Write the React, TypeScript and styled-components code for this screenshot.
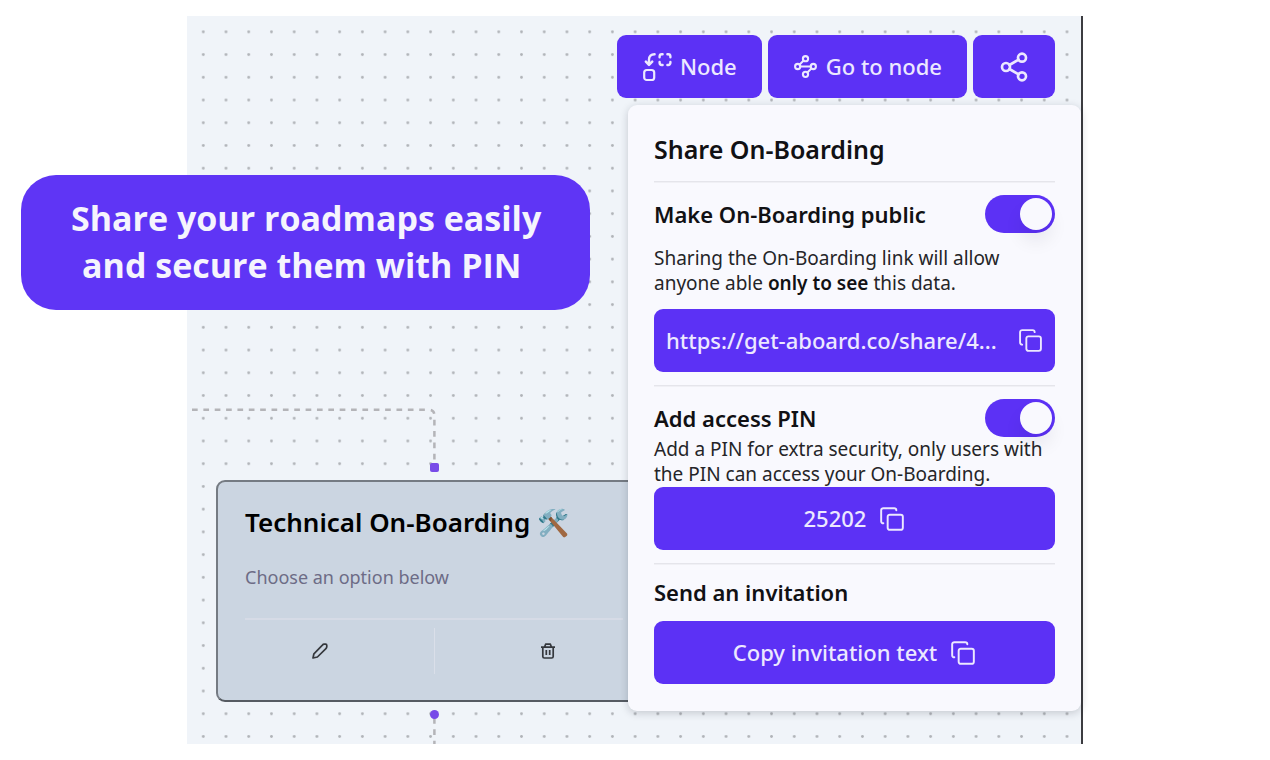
import React from "react";
import styled, { createGlobalStyle, css } from "styled-components";
import { Copy, Share2, Waypoints } from "lucide-react";

const color = {
  primary: "#5c31f5",
  callout: "#5f35f5",
  onPrimary: "#ece8ff",
  canvas: "#f0f4f9",
  panel: "#f9f9fe",
  card: "#cbd5e1",
  ink: "#111114",
  line: "#e5e5eb",
  edge: "#b4b4b8",
  handle: "#784be8",
};

const GlobalStyle = createGlobalStyle`
  * { box-sizing: border-box; }
  body {
    margin: 0;
    background: #ffffff;
    color: ${color.ink};
    font-family: "Noto Sans", "Open Sans", sans-serif;
  }
  h1, h2, h3, p { margin: 0; }
  button { font-family: inherit; cursor: pointer; }
`;

const Page = styled.main`
  padding: 16px 187px;
`;

const Stage = styled.section`
  position: relative;
  display: flex;
  flex-direction: column;
  align-items: flex-end;
  gap: 7px;
  padding: 19px 0 33px;
  background: ${color.canvas};
  border-right: 2px solid #3c3c40;
`;

const Backdrop = styled.svg`
  position: absolute;
  inset: 0;
  width: 100%;
  height: 100%;
`;

const Toolbar = styled.nav`
  position: relative;
  display: flex;
  gap: 6px;
  padding-right: 26px;
`;

const Button = styled.button<{ $block?: boolean; $spread?: boolean; $gap?: number }>`
  display: flex;
  align-items: center;
  justify-content: ${(p) => (p.$spread ? "space-between" : "center")};
  gap: ${(p) => p.$gap ?? 8}px;
  height: 63px;
  padding: 0 ${(p) => (p.$spread ? 12 : 25)}px;
  border: 0;
  border-radius: 9px;
  background: ${color.primary};
  color: ${color.onPrimary};
  font-size: 22px;
  font-weight: 500;
  line-height: 31px;
  white-space: nowrap;
  ${(p) =>
    p.$block &&
    css`
      width: 100%;
    `}
`;

const Panel = styled.aside`
  position: relative;
  display: flex;
  flex-direction: column;
  gap: 13px;
  width: 453px;
  padding: 26px 26px 27px;
  border-radius: 9px;
  background: ${color.panel};
  box-shadow: 0 2px 8px rgba(20, 24, 40, 0.2);
`;

const PanelTitle = styled.h1`
  font-size: 25px;
  font-weight: 600;
  line-height: 37px;
`;

const Divider = styled.hr`
  width: 100%;
  height: 1px;
  margin: 0;
  border: 0;
  background: ${color.line};
  box-shadow: 0 1px 0 #f0f0f5;
`;

const SettingRow = styled.label`
  display: flex;
  align-items: center;
  justify-content: space-between;
  height: 38px;
  font-size: 22px;
  font-weight: 600;
  line-height: 28px;
  cursor: pointer;
`;

const SectionTitle = styled.h2`
  font-size: 22px;
  font-weight: 600;
  line-height: 31px;
`;

const Switch = styled.input`
  appearance: none;
  display: flex;
  width: 70px;
  height: 38px;
  margin: 0;
  padding: 3px;
  border-radius: 19px;
  background: #c9c9d6;
  cursor: pointer;

  &::before {
    content: "";
    width: 32px;
    height: 32px;
    border-radius: 50%;
    background: ${color.panel};
    box-shadow: 0 12px 18px rgba(20, 20, 40, 0.07);
  }

  &:checked {
    justify-content: flex-end;
    background: ${color.primary};
  }
`;

const Note = styled.p`
  font-size: 19px;
  line-height: 25px;
  color: #252528;

  strong { font-weight: 600; color: ${color.ink}; }
`;

const Group = styled.div`
  display: flex;
  flex-direction: column;
`;

const NodeCard = styled.article`
  position: absolute;
  left: 29px;
  top: 464px;
  width: 436px;
  padding: 22px 27px 26px;
  border: 2px solid #757b83;
  border-bottom-color: #565b62;
  border-radius: 9px;
  background: ${color.card};
`;

const NodeTitle = styled.h3`
  margin-bottom: 24px;
  font-size: 26px;
  font-weight: 600;
  line-height: 36px;
  color: #000000;
  white-space: nowrap;
`;

const NodeText = styled.p`
  margin-bottom: 28px;
  font-size: 18px;
  line-height: 26px;
  color: #6d6c86;
`;

const NodeActions = styled.div`
  display: flex;
  padding-top: 8px;
  border-top: 2px solid #d6dbe6;
`;

const NodeAction = styled.button`
  display: flex;
  flex: 1;
  align-items: center;
  justify-content: center;
  height: 46px;
  padding: 0 38px 0 0;
  border: 0;
  background: none;
  color: #35383d;

  & + & {
    padding: 0 0 0 38px;
    border-left: 1px solid #dadfe9;
  }
`;

const Handle = styled.span<{ $side: "top" | "bottom" }>`
  position: absolute;
  left: 212px;
  ${(p) => (p.$side === "top" ? "top: -19px" : "bottom: -19px")};
  width: 9px;
  height: 9px;
  border-radius: ${(p) => (p.$side === "top" ? "2px" : "50%")};
  background: ${color.handle};
`;

const Callout = styled.p`
  position: absolute;
  left: -166px;
  top: 159px;
  padding: 20px 49px 21px 50px;
  border-radius: 35px;
  background: ${color.callout};
  color: #f5f4fd;
  font-family: "Open Sans", "Noto Sans", sans-serif;
  font-size: 34px;
  font-weight: 700;
  line-height: 47px;
  text-align: center;
  white-space: pre;
`;

const AddNodeIcon = () => (
  <svg width="30" height="30" viewBox="0 0 30 30" fill="none" stroke="currentColor" strokeWidth="2.2" strokeLinecap="round" aria-hidden="true">
    <rect x="2.2" y="18" width="10" height="10" rx="2.6" />
    <path d="M12.6 2.2C9 2.2 7 4.2 7 7.6V12" strokeWidth="2.4" />
    <path d="M3.9 9.6L7 12.8l3.2-3.2" strokeWidth="2.6" strokeLinejoin="round" />
    <path
      d="M17.6 5.2V4.4A2.2 2.2 0 0 1 19.8 2.2h.8M25.4 2.2h.8a2.2 2.2 0 0 1 2.2 2.2v.8M28.4 10v.8a2.2 2.2 0 0 1-2.2 2.2h-.8M20.6 13h-.8a2.2 2.2 0 0 1-2.2-2.2V10"
      strokeWidth="2.4"
    />
  </svg>
);

const PencilIcon = () => (
  <svg width="16" height="16" viewBox="0 0 16 16" fill="none" stroke="currentColor" strokeWidth="1.7" strokeLinejoin="round" aria-hidden="true">
    <path d="M1 15l.9-4.2L10.4 2.1a2.6 2.6 0 0 1 1.8-.9h1.4c.8 0 1.2.4 1.2 1.2v1.2c0 .8-.3 1.4-.9 2L5.4 14z" />
  </svg>
);

const TrashIcon = () => (
  <svg width="16" height="16" viewBox="0 0 16 16" fill="none" stroke="currentColor" strokeWidth="1.7" strokeLinejoin="round" aria-hidden="true">
    <path d="M1 4.2h14M4.6 4L5.6 1.2h4.8L11.4 4M2.8 4.2v9.2c0 1 .6 1.6 1.6 1.6h7.2c1 0 1.6-.6 1.6-1.6V4.2" />
    <path d="M6.3 7v5M9.7 7v5" />
  </svg>
);

const CanvasBackdrop = () => (
  <Backdrop aria-hidden="true">
    <defs>
      <pattern id="dots" width="20" height="20" patternUnits="userSpaceOnUse" patternTransform="translate(4.9 4.5) scale(1.1365)">
        <circle cx="10" cy="10" r="1.25" fill="#b0b3b8" />
      </pattern>
    </defs>
    <rect width="100%" height="100%" fill="url(#dots)" />
    <g fill="none" stroke={color.edge} strokeWidth="2.5" strokeDasharray="5.68 5.68">
      <path d="M5 393.8H241.5Q247.4 393.8 247.4 399.5V448" />
      <path d="M247.4 702V728" />
    </g>
  </Backdrop>
);

export default function App() {
  return (
    <>
      <GlobalStyle />
      <Page>
        <Stage>
          <CanvasBackdrop />

          <NodeCard>
            <Handle $side="top" />
            <NodeTitle>Technical On-Boarding 🛠️</NodeTitle>
            <NodeText>Choose an option below</NodeText>
            <NodeActions>
              <NodeAction aria-label="Edit node">
                <PencilIcon />
              </NodeAction>
              <NodeAction aria-label="Delete node">
                <TrashIcon />
              </NodeAction>
            </NodeActions>
            <Handle $side="bottom" />
          </NodeCard>

          <Toolbar>
            <Button>
              <AddNodeIcon />
              Node
            </Button>
            <Button>
              <Waypoints size={25} />
              Go to node
            </Button>
            <Button aria-label="Share">
              <Share2 size={32} />
            </Button>
          </Toolbar>

          <Panel>
            <PanelTitle>Share On-Boarding</PanelTitle>
            <Divider />
            <SettingRow>
              Make On-Boarding public
              <Switch type="checkbox" defaultChecked />
            </SettingRow>
            <Note>
              Sharing the On-Boarding link will allow anyone able <strong>only to see</strong> this data.
            </Note>
            <Button $block $spread>
              https://get-aboard.co/share/4...
              <Copy size={25} strokeWidth={1.8} />
            </Button>
            <Divider />
            <Group>
              <SettingRow>
                Add access PIN
                <Switch type="checkbox" defaultChecked />
              </SettingRow>
              <Note>Add a PIN for extra security, only users with the PIN can access your On-Boarding.</Note>
              <Button $block $gap={13}>
                25202
                <Copy size={26} strokeWidth={1.8} />
              </Button>
            </Group>
            <Divider />
            <SectionTitle>Send an invitation</SectionTitle>
            <Button $block $gap={13}>
              Copy invitation text
              <Copy size={26} strokeWidth={1.8} />
            </Button>
          </Panel>

          <Callout>{"Share your roadmaps easily\nand secure them with PIN "}</Callout>
        </Stage>
      </Page>
    </>
  );
}
